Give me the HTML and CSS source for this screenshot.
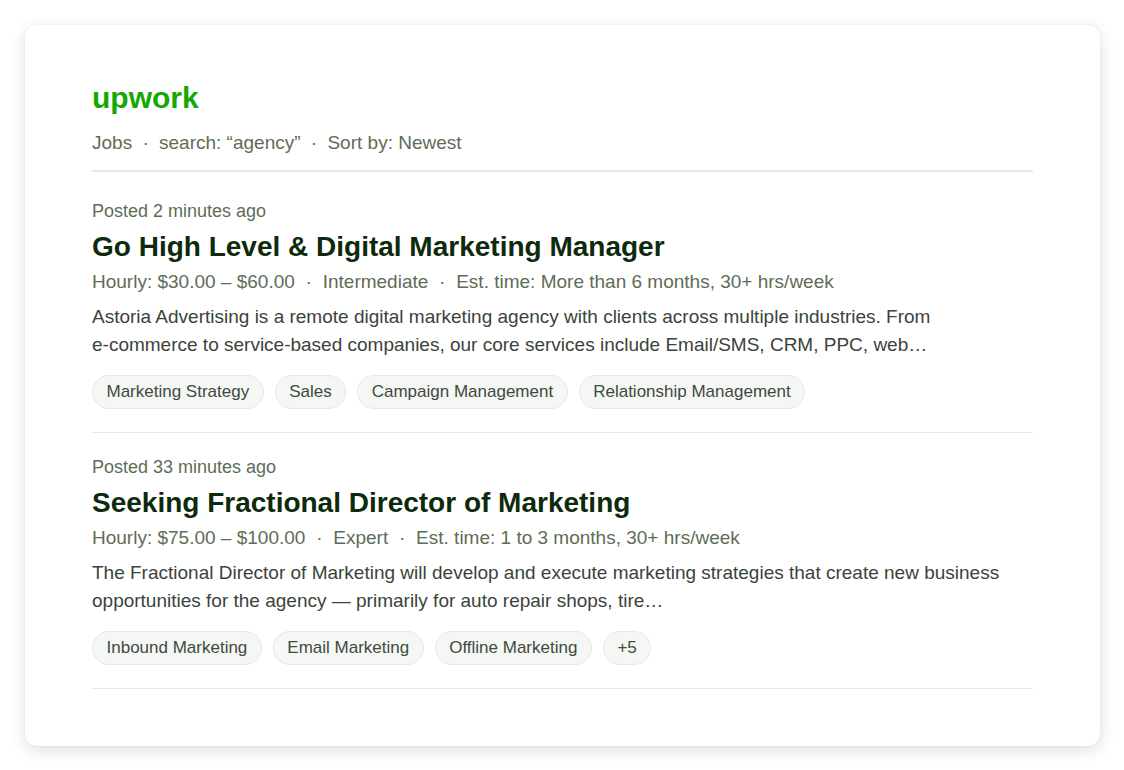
FILE: index.html
```html
<!DOCTYPE html>
<html lang="en">
<head>
    <meta charset="UTF-8">
    <meta name="viewport" content="width=device-width, initial-scale=1.0">
    <title>Upwork Jobs</title>
    <link rel="stylesheet" href="styles.css">
</head>
<body>
    <div class="card">
        <div class="header">
            <h1 class="brand">upwork</h1>
            <div class="crumbs">Jobs <span class="dot">·</span> search: “agency” <span class="dot">·</span> Sort by: Newest</div>
        </div>

        <div class="job">
            <div class="posted">Posted 2 minutes ago</div>
            <h2 class="job-title">Go High Level &amp; Digital Marketing Manager</h2>
            <div class="meta">Hourly: $30.00 – $60.00 <span class="dot">·</span> Intermediate <span class="dot">·</span> Est. time: More than 6 months, 30+ hrs/week</div>
            <p class="desc">Astoria Advertising is a remote digital marketing agency with clients across multiple industries. From <span class="nowrap">e-commerce</span> to service-based companies, our core services include Email/SMS, CRM, PPC, web…</p>
            <div class="tags">
                <span class="tag">Marketing Strategy</span>
                <span class="tag">Sales</span>
                <span class="tag">Campaign Management</span>
                <span class="tag">Relationship Management</span>
            </div>
        </div>

        <div class="job">
            <div class="posted">Posted 33 minutes ago</div>
            <h2 class="job-title">Seeking Fractional Director of Marketing</h2>
            <div class="meta">Hourly: $75.00 – $100.00 <span class="dot">·</span> Expert <span class="dot">·</span> Est. time: 1 to 3 months, 30+ hrs/week</div>
            <p class="desc">The Fractional Director of Marketing will develop and execute marketing strategies that create new business opportunities for the agency — primarily for auto repair shops, tire…</p>
            <div class="tags">
                <span class="tag">Inbound Marketing</span>
                <span class="tag">Email Marketing</span>
                <span class="tag">Offline Marketing</span>
                <span class="tag">+5</span>
            </div>
        </div>
    </div>
</body>
</html>
```

FILE: styles.css
```css
body {
    font-family: "Liberation Sans", Arial, sans-serif;
    background-color: #fff;
    margin: 0;
}

.card {
    margin: 25px;
    width: 1075px;
    height: 721px;
    box-sizing: border-box;
    padding: 55px 67px;
    background-color: #fff;
    border-radius: 12px;
    box-shadow: 0 4px 16px rgba(0, 0, 0, 0.13), 0 0 2px rgba(0, 0, 0, 0.08);
}

.header {
    margin-bottom: 5px;
    padding-bottom: 15px;
    border-bottom: 2px solid #e4e9e3;
}

.brand {
    margin: 0;
    font-size: 30px;
    line-height: 36px;
    font-weight: bold;
    color: #14a800;
}

.crumbs {
    margin-top: 14px;
    font-size: 19px;
    line-height: 25px;
    color: #5e6d56;
}

.dot {
    margin: 0 5px;
}

.job {
    padding: 22px 0 23px;
    border-bottom: 1px solid #e4e9e3;
}

.posted {
    font-size: 18px;
    line-height: 25px;
    color: #5e6d56;
}

.job-title {
    margin: 5px 0 0;
    font-size: 28px;
    line-height: 35px;
    font-weight: bold;
    color: #0d2a0d;
}

.meta {
    margin-top: 5px;
    font-size: 19px;
    line-height: 25px;
    color: #5e6d56;
}

.meta .dot {
    margin: 0 5.5px;
}

.desc {
    margin: 9px 0 0;
    max-width: 920px;
    font-size: 19px;
    line-height: 28px;
    color: #3a443a;
}

.nowrap {
    white-space: nowrap;
}

.tags {
    display: flex;
    flex-wrap: wrap;
    gap: 11px;
    margin-top: 16px;
}

.tag {
    padding: 0 13.5px;
    height: 34px;
    line-height: 32px;
    box-sizing: border-box;
    font-size: 17px;
    color: #3e4a3e;
    background-color: #f5f7f4;
    border: 1px solid #e4e9e3;
    border-radius: 17px;
}
```
